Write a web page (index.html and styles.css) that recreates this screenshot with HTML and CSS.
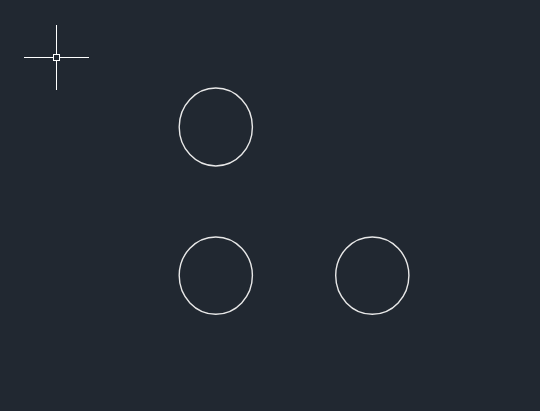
FILE: index.html
```html
<!DOCTYPE html>
<html lang="en">
<head>
    <meta charset="UTF-8">
    <meta name="viewport" content="width=device-width, initial-scale=1.0">
    <title>Drawing Canvas</title>
    <link rel="stylesheet" href="styles.css">
</head>
<body>
    <div id="canvas">
        <svg class="drawing" width="540" height="411" viewBox="0 0 540 411">
            <!-- cursor crosshair -->
            <g class="cursor">
                <line x1="56.5" y1="25" x2="56.5" y2="54"></line>
                <line x1="56.5" y1="61" x2="56.5" y2="90"></line>
                <line x1="24" y1="57.5" x2="53" y2="57.5"></line>
                <line x1="60" y1="57.5" x2="89" y2="57.5"></line>
                <rect x="53.5" y="54.5" width="6" height="6"></rect>
            </g>
            <!-- circles -->
            <g class="shapes">
                <ellipse cx="215.8" cy="127" rx="36.6" ry="39"></ellipse>
                <ellipse cx="215.8" cy="275.6" rx="36.6" ry="38.6"></ellipse>
                <ellipse cx="372.3" cy="275.6" rx="36.6" ry="38.6"></ellipse>
            </g>
        </svg>
    </div>
</body>
</html>
```

FILE: styles.css
```css
body {
    margin: 0;
    padding: 0;
    background: #212831;
    overflow: hidden;
    font-family: 'Liberation Sans', sans-serif;
}

#canvas {
    width: 540px;
    height: 411px;
}

.drawing {
    display: block;
}

.cursor line,
.cursor rect {
    stroke: #ffffff;
    stroke-width: 1;
    fill: none;
}

.shapes ellipse {
    stroke: #e8e8e8;
    stroke-width: 1.4;
    fill: none;
}
```
